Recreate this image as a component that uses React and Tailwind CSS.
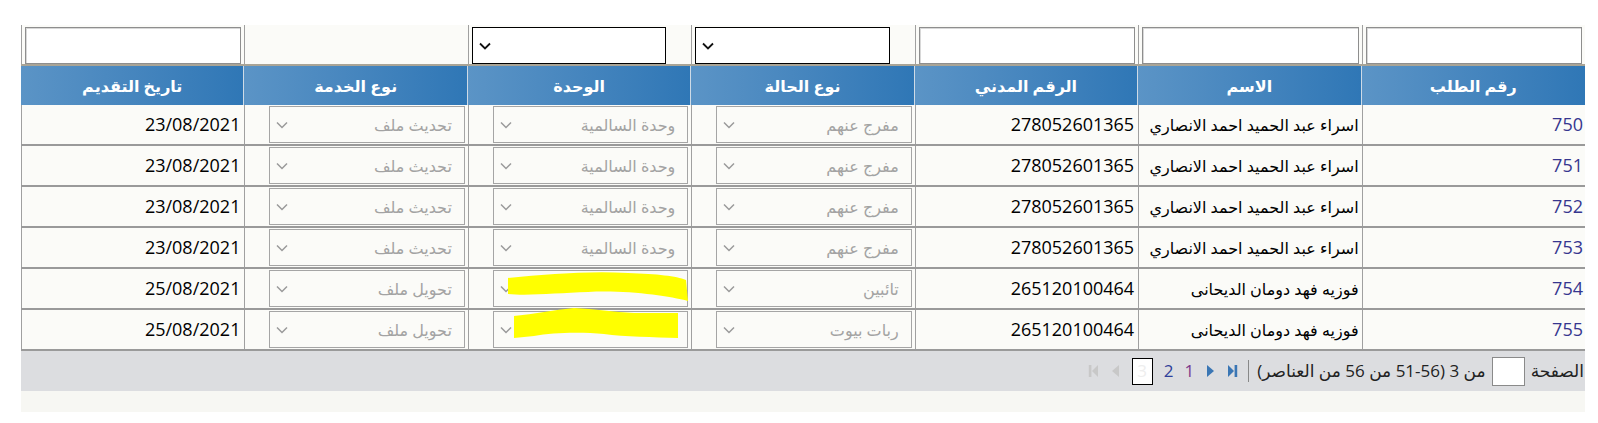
import React from "react";

const rows = [
  { id: "750", name: "اسراء عبد الحميد احمد الانصاري", civil: "278052601365", status: "مفرج عنهم", unit: "وحدة السالمية", service: "تحديث ملف", date: "23/08/2021" },
  { id: "751", name: "اسراء عبد الحميد احمد الانصاري", civil: "278052601365", status: "مفرج عنهم", unit: "وحدة السالمية", service: "تحديث ملف", date: "23/08/2021" },
  { id: "752", name: "اسراء عبد الحميد احمد الانصاري", civil: "278052601365", status: "مفرج عنهم", unit: "وحدة السالمية", service: "تحديث ملف", date: "23/08/2021" },
  { id: "753", name: "اسراء عبد الحميد احمد الانصاري", civil: "278052601365", status: "مفرج عنهم", unit: "وحدة السالمية", service: "تحديث ملف", date: "23/08/2021" },
  { id: "754", name: "فوزيه فهد دومان الديحانى", civil: "265120100464", status: "تائبين", unit: "", service: "تحويل ملف", date: "25/08/2021", hl: 1 },
  { id: "755", name: "فوزيه فهد دومان الديحانى", civil: "265120100464", status: "ربات بيوت", unit: "", service: "تحويل ملف", date: "25/08/2021", hl: 2 },
];

const headers = ["رقم الطلب", "الاسم", "الرقم المدني", "نوع الحالة", "الوحدة", "نوع الخدمة", "تاريخ التقديم"];

function Chevron({ color = "#9a9a9a", w = 1.5 }) {
  return (
    <svg width="12" height="8" viewBox="0 0 12 8" className="shrink-0">
      <polyline points="1,1.5 6,6.5 11,1.5" fill="none" stroke={color} strokeWidth={w} />
    </svg>
  );
}

function DisabledSelect({ text, hl }) {
  return (
    <div className="relative mr-[3px] ml-[24px] h-[37px] w-[196px] border border-[#a5a5a5] flex items-center justify-between pr-[12px] pl-[6px]">
      <span className="text-[16px] text-[#a3a3a3] whitespace-nowrap">{text}</span>
      <Chevron />
      {hl === 1 && (
        <svg className="absolute left-[14px] top-[1px]" width="180" height="30" viewBox="0 0 180 30">
          <path d="M0,6 C40,2 80,-1 120,1 C150,2 168,4 178,8 L180,29 C160,24 120,18 80,20 C50,21 20,24 0,22 Z" fill="#ffff00" />
        </svg>
      )}
      {hl === 2 && (
        <svg className="absolute left-[20px] top-[-4px]" width="166" height="32" viewBox="0 0 166 32">
          <path d="M0,8 C20,6 40,2 60,0 C80,1 100,4 120,5 L164,5 L164,30 C140,29 110,29 90,26 C70,24 40,24 20,28 L0,30 Z" fill="#ffff00" />
        </svg>
      )}
    </div>
  );
}

function FilterInput() {
  return <div className="mx-[3px] h-[37px] border border-[#8e8e8e] bg-white shadow-[inset_1px_1px_0_#d8d8d8]" />;
}

function FilterSelect() {
  return (
    <div className="ml-[3px] mr-[25px] h-[37px] border border-black bg-white flex items-center justify-end pl-[6px]">
      <Chevron color="#111" w={1.8} />
    </div>
  );
}

function Tri({ dir = "right", color, bar }) {
  return (
    <svg width="11" height="14" viewBox="0 0 11 14">
      {dir === "right" ? (
        <>
          <path d={bar ? "M1,1 L7,7 L1,13 Z" : "M2,1 L9,7 L2,13 Z"} fill={color} />
          {bar && <rect x="7.6" y="1" width="2.6" height="12" fill={color} />}
        </>
      ) : (
        <>
          <path d={bar ? "M10,1 L4,7 L10,13 Z" : "M9,1 L2,7 L9,13 Z"} fill={color} />
          {bar && <rect x="0.8" y="1" width="2.6" height="12" fill={color} />}
        </>
      )}
    </svg>
  );
}

export default function App() {
  const cell = "border-l border-[#a0a0a0]";
  return (
    <div
      dir="rtl"
      className="w-[1598px] h-[423px] bg-white pt-[25px] overflow-hidden"
      style={{ fontFamily: '"Open Sans", "DejaVu Sans", sans-serif' }}
    >
      <div className="mr-[13px] w-[1564px] bg-[#fbfbf8]">
        {/* filter row */}
        <div className="grid grid-cols-7 h-[39px] items-start">
          <div className={`${cell} h-full pt-[2px]`}><FilterInput /></div>
          <div className={`${cell} h-full pt-[2px]`}><FilterInput /></div>
          <div className={`${cell} h-full pt-[2px]`}><FilterInput /></div>
          <div className={`${cell} h-full pt-[2px]`}><FilterSelect /></div>
          <div className={`${cell} h-full pt-[2px]`}><FilterSelect /></div>
          <div className={`${cell} h-full`} />
          <div className={`${cell} h-full pt-[2px]`}><FilterInput /></div>
        </div>
        {/* header */}
        <div className="grid grid-cols-7 h-[41px] border-t-2 border-[#a9a496]">
          {headers.map((h, i) => (
            <div
              key={i}
              className={`flex items-center justify-center bg-gradient-to-l from-[#2f77b6] to-[#5b94c6] text-white font-bold text-[16px] ${i > 0 ? "border-r border-[#cfdbe6]" : ""}`}
            >
              {h}
            </div>
          ))}
        </div>
        {/* rows */}
        {rows.map((r) => (
          <div key={r.id} className="grid grid-cols-7 h-[41px] border-b-2 border-[#9a9a9a] text-[18px]">
            <div className={`${cell} flex items-center pr-[2px] text-[#36368f]`}>{r.id}</div>
            <div className={`${cell} flex items-center pr-[3px] text-black whitespace-nowrap text-[16px]`}>{r.name}</div>
            <div className={`${cell} flex items-center pr-[4px] text-black`}>{r.civil}</div>
            <div className={`${cell} flex items-center`}><DisabledSelect text={r.status} /></div>
            <div className={`${cell} flex items-center`}><DisabledSelect text={r.unit} hl={r.hl} /></div>
            <div className={`${cell} flex items-center`}><DisabledSelect text={r.service} /></div>
            <div className={`${cell} flex items-center pr-[4px] text-black`}>{r.date}</div>
          </div>
        ))}
        {/* pager */}
        <div className="h-[40px] bg-[#dcdde0] flex items-center text-[17px] text-[#222] pr-[1px]">
          <span>الصفحة</span>
          <div className="mr-[6px] w-[33px] h-[29px] border border-[#8a8a8a] bg-white" />
          <span className="mr-[6px] whitespace-nowrap">من 3 (56-51 من 56 من العناصر)</span>
          <div className="mr-[8px] w-px h-[22px] bg-[#888]" />
          <div className="mr-[10px] flex items-center gap-[11px]">
            <Tri dir="right" bar color="#3a76b4" />
            <Tri dir="right" color="#3a76b4" />
            <span className="text-[#7a3a8e]">1</span>
            <span className="text-[#2f3f9a]">2</span>
            <div className="w-[21px] h-[27px] border border-black bg-white flex items-center justify-center text-[#eee]">3</div>
            <Tri dir="left" color="#c8c8c8" />
            <Tri dir="left" bar color="#c8c8c8" />
          </div>
        </div>
        <div className="h-[21px] bg-[#f7f7f3]" />
      </div>
    </div>
  );
}
